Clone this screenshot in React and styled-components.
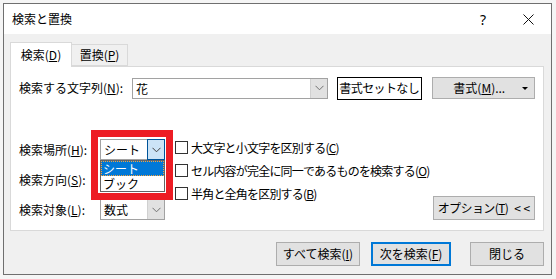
import styled, { createGlobalStyle } from "styled-components";

const GlobalStyle = createGlobalStyle`
  html, body { margin: 0; padding: 0; background: #f5f5f5; }
  body {
    font-family: "Noto Sans CJK JP", "Noto Sans", sans-serif;
    font-size: 12px;
    color: #000;
  }
  * { box-sizing: border-box; }
`;

const Chevron = ({ color = "#606060" }) => (
  <svg width="9" height="6" viewBox="0 0 9 6">
    <polyline points="0.5,0.8 4.5,4.8 8.5,0.8" fill="none" stroke={color} strokeWidth="1" />
  </svg>
);

const CloseIcon = () => (
  <svg width="11" height="11" viewBox="0 0 11 11">
    <path d="M0.5 0.5 L10.5 10.5 M10.5 0.5 L0.5 10.5" stroke="#111" strokeWidth="1" />
  </svg>
);

const Combo = ({ width, text, active, children }) => (
  <ComboBox $width={width}>
    <ComboText>{text}</ComboText>
    <ComboArrow $active={active}>
      <Chevron color={active ? "#404040" : "#707070"} />
    </ComboArrow>
    {children}
  </ComboBox>
);

const Check = ({ children }) => (
  <CheckRow>
    <CheckBox />
    <span>{children}</span>
  </CheckRow>
);

export default function App() {
  return (
    <>
      <GlobalStyle />
      <Window>
        <TitleBar>
          <Title>検索と置換</Title>
          <TitleButton>?</TitleButton>
          <TitleButton $close>
            <CloseIcon />
          </TitleButton>
        </TitleBar>
        <Body>
          <Tabs>
            <Tab $active>検索(<u>D</u>)</Tab>
            <Tab>置換(<u>P</u>)</Tab>
          </Tabs>
          <Panel>
            <SearchRow>
              <Label $width={113}>検索する文字列(<u>N</u>):</Label>
              <Combo width={196} text="花" />
              <PreviewBox>書式セットなし</PreviewBox>
              <FormatButton>
                <FormatText>書式(<u>M</u>)...</FormatText>
                <Caret />
              </FormatButton>
            </SearchRow>
            <Options>
              <LeftCol>
                <FieldRow>
                  <Label $width={81}>検索場所(<u>H</u>):</Label>
                  <Combo width={65} text="シート" active>
                    <DropList>
                      <DropItem $selected>シート</DropItem>
                      <DropItem>ブック</DropItem>
                    </DropList>
                    <RedFrame />
                  </Combo>
                </FieldRow>
                <FieldRow>
                  <Label $width={81}>検索方向(<u>S</u>):</Label>
                  <Combo width={65} text="" />
                </FieldRow>
                <FieldRow>
                  <Label $width={81}>検索対象(<u>L</u>):</Label>
                  <Combo width={65} text="数式" />
                </FieldRow>
              </LeftCol>
              <CheckCol>
                <Check>大文字と小文字を区別する(<u>C</u>)</Check>
                <Check>セル内容が完全に同一であるものを検索する(<u>O</u>)</Check>
                <Check>半角と全角を区別する(<u>B</u>)</Check>
              </CheckCol>
              <OptionButton>
                オプション(<u>T</u>)<Arrows>&lt; &lt;</Arrows>
              </OptionButton>
            </Options>
          </Panel>
          <Footer>
            <Button $width={84}>すべて検索(<u>I</u>)</Button>
            <Button $width={80} $default>次を検索(<u>F</u>)</Button>
            <Button $width={74} $gap={19}>閉じる</Button>
          </Footer>
        </Body>
      </Window>
    </>
  );
}

const Window = styled.div`
  margin: 3px 0 0 3px;
  width: 549px;
  height: 272px;
  border: 1px solid #6f6f6f;
  background: #f0f0f0;
  display: flex;
  flex-direction: column;
`;

const TitleBar = styled.div`
  height: 30px;
  background: #fff;
  display: flex;
  align-items: center;
  padding-left: 8px;
`;

const Title = styled.div`
  flex: 1;
  font-size: 12px;
  line-height: 16px;
`;

const TitleButton = styled.div`
  width: ${(p) => (p.$close ? 45 : 46)}px;
  height: 30px;
  display: flex;
  align-items: center;
  justify-content: center;
  font-family: "Noto Sans", sans-serif;
  font-size: 14px;
`;

const Body = styled.div`
  flex: 1;
  padding: 8px 7px 0 6px;
  display: flex;
  flex-direction: column;
`;

const Tabs = styled.div`
  display: flex;
  align-items: flex-end;
  height: 24px;
  position: relative;
  z-index: 1;
`;

const Tab = styled.div`
  width: ${(p) => (p.$active ? 62 : 56)}px;
  height: ${(p) => (p.$active ? 25 : 22)}px;
  margin-bottom: ${(p) => (p.$active ? -1 : 0)}px;
  border: 1px solid #d9d9d9;
  border-bottom: ${(p) => (p.$active ? "none" : "1px solid #d9d9d9")};
  border-left: ${(p) => (p.$active ? "1px solid #d9d9d9" : "none")};
  background: ${(p) => (p.$active ? "#fff" : "#f0f0f0")};
  display: flex;
  align-items: center;
  justify-content: center;
  line-height: 16px;
  padding-bottom: ${(p) => (p.$active ? 1 : 0)}px;
`;

const Panel = styled.div`
  width: 534px;
  height: 165px;
  background: #fff;
  border: 1px solid #d9d9d9;
  padding: 10px 8px 0 8px;
  display: flex;
  flex-direction: column;
`;

const SearchRow = styled.div`
  display: flex;
  align-items: center;
  height: 22px;
`;

const Label = styled.div`
  width: ${(p) => p.$width}px;
  flex-shrink: 0;
  line-height: 16px;
  white-space: nowrap;
`;

const ComboBox = styled.div`
  position: relative;
  width: ${(p) => p.$width}px;
  height: 21px;
  flex-shrink: 0;
  border: 1px solid #a2a2a2;
  background: #fff;
  display: flex;
`;

const ComboText = styled.div`
  flex: 1;
  padding-left: 3px;
  line-height: 19px;
  white-space: nowrap;
  overflow: hidden;
`;

const ComboArrow = styled.div`
  width: ${(p) => (p.$active ? 18 : 17)}px;
  margin: ${(p) => (p.$active ? "-1px -1px -1px 0" : "0")};
  background: ${(p) => (p.$active ? "#cce4f7" : "#e1e1e1")};
  border: ${(p) => (p.$active ? "1px solid #005499" : "none")};
  border-left: 1px solid ${(p) => (p.$active ? "#005499" : "#d0d0d0")};
  display: flex;
  align-items: center;
  justify-content: center;
`;

const DropList = styled.div`
  position: absolute;
  top: 20px;
  left: -1px;
  width: 65px;
  height: 32px;
  background: #fff;
  border: 1px solid #646464;
  z-index: 2;
`;

const DropItem = styled.div`
  height: 15px;
  line-height: 15px;
  padding-left: 2px;
  color: ${(p) => (p.$selected ? "#fff" : "#000")};
  background: ${(p) => (p.$selected ? "#0078d7" : "transparent")};
  outline: ${(p) => (p.$selected ? "1px dotted #f7a33c" : "none")};
  outline-offset: -1px;
`;

const RedFrame = styled.div`
  position: absolute;
  top: -10px;
  left: -10px;
  width: 82px;
  height: 70px;
  border: 7px solid #ed1c24;
  z-index: 3;
  pointer-events: none;
`;

const PreviewBox = styled.div`
  margin-left: 9px;
  width: 85px;
  height: 23px;
  border: 1px solid #000;
  display: flex;
  align-items: center;
  justify-content: center;
  line-height: 16px;
  white-space: nowrap;
  letter-spacing: -0.6px;
`;

const FormatButton = styled.div`
  margin-left: 10px;
  width: 104px;
  height: 22px;
  background: #e1e1e1;
  border: 1px solid #adadad;
  display: flex;
  align-items: center;
  padding-right: 6px;
`;

const FormatText = styled.span`
  flex: 1;
  text-align: center;
  padding-left: 4px;
  line-height: 16px;
`;

const Caret = styled.span`
  width: 0;
  height: 0;
  border-left: 3px solid transparent;
  border-right: 3px solid transparent;
  border-top: 3px solid #000;
`;

const Options = styled.div`
  margin-top: 40px;
  display: flex;
  align-items: flex-start;
`;

const LeftCol = styled.div`
  display: flex;
  flex-direction: column;
  gap: 9px;
`;

const FieldRow = styled.div`
  display: flex;
  align-items: center;
  height: 21px;
`;

const CheckCol = styled.div`
  margin-left: 10px;
  display: flex;
  flex-direction: column;
  gap: 6px;
`;

const CheckRow = styled.div`
  display: flex;
  align-items: center;
  height: 17px;
  white-space: nowrap;
  line-height: 16px;
  letter-spacing: -0.8px;
`;

const CheckBox = styled.span`
  width: 13px;
  height: 13px;
  border: 1px solid #333;
  background: #fff;
  margin-right: 3px;
  flex-shrink: 0;
`;

const OptionButton = styled.div`
  margin-left: auto;
  align-self: flex-end;
  width: 102px;
  height: 24px;
  background: #e1e1e1;
  border: 1px solid #adadad;
  display: flex;
  align-items: center;
  justify-content: center;
  line-height: 16px;
  white-space: nowrap;
  letter-spacing: -0.6px;
`;

const Arrows = styled.span`
  margin-left: 6px;
  letter-spacing: 0;
`;

const Footer = styled.div`
  width: 534px;
  margin-top: 11px;
  display: flex;
  justify-content: flex-end;
`;

const Button = styled.div`
  width: ${(p) => p.$width}px;
  height: 24px;
  margin-left: ${(p) => p.$gap ?? 11}px;
  background: #e1e1e1;
  border: ${(p) => (p.$default ? "2px solid #0078d7" : "1px solid #adadad")};
  display: flex;
  align-items: center;
  justify-content: center;
  line-height: 16px;
  white-space: nowrap;
`;
